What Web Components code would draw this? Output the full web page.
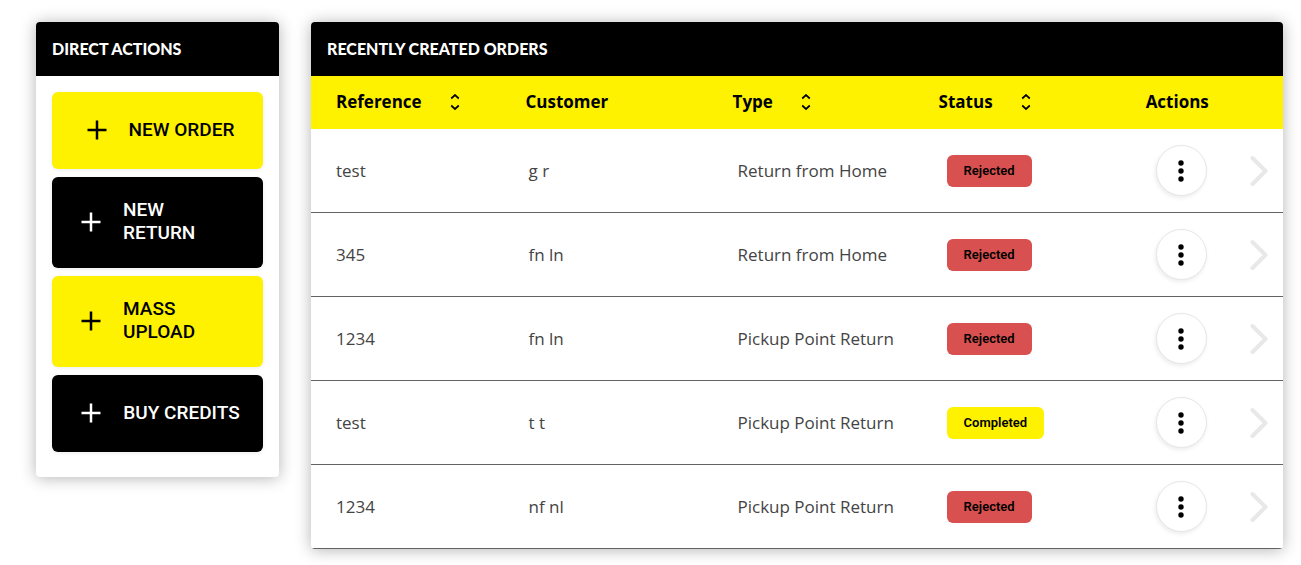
<!DOCTYPE html>
<html lang="en">
<head>
<meta charset="utf-8">
<title>Orders dashboard</title>
<style>
  body { margin: 0; background: #fff; font-family: "Open Sans", "Noto Sans", sans-serif; }
</style>
</head>
<body>
<orders-dashboard></orders-dashboard>

<script>
const define = (name, html, setup) => {
  const template = document.createElement("template");
  template.innerHTML = html;
  customElements.define(name, class extends HTMLElement {
    constructor() {
      super();
      this.attachShadow({ mode: "open" }).append(template.content.cloneNode(true));
    }
    connectedCallback() { if (setup) setup(this, this.shadowRoot); }
  });
};

define("panel-card", `
  <style>
    :host { display: block; background: #fff; border-radius: 4px; box-shadow: 0 1px 16px rgba(0,0,0,.3); overflow: hidden; }
    h2 { margin: 0; padding: 0 16px; background: #000; color: #fff; font: 900 16px/54px Lato, sans-serif; }
  </style>
  <h2><slot name="title"></slot></h2>
  <slot></slot>
`);

define("action-button", `
  <style>
    :host { display: block; }
    button { display: flex; width: 100%; box-sizing: border-box; justify-content: center; align-items: center; gap: 16px;
      margin: 0; padding: 21px 23px 24px; border: 0; border-radius: 6px; background: #fff200; color: #000;
      font: 500 19px/23px Roboto, sans-serif; text-align: left; cursor: pointer; box-shadow: 0 1px 4px rgba(0,0,0,.08); }
    :host([dark]) button { background: #000; color: #fff; }
    svg { flex: none; }
  </style>
  <button type="button">
    <svg width="32" height="32" viewBox="0 0 32 32" aria-hidden="true"><path d="M16 7.500v19M6.500 17h19" stroke="currentColor" stroke-width="2.500" fill="none"/></svg>
    <span><slot></slot></span>
  </button>
`);

define("sort-toggle", `
  <style>
    :host { display: inline-flex; vertical-align: middle; }
    button { display: flex; margin: 0; padding: 0; border: 0; background: none; color: #000; cursor: pointer; }
  </style>
  <button type="button" aria-label="Sort"><svg width="10" height="18" viewBox="0 0 10 18" fill="none" stroke="currentColor" stroke-width="1.700"><path d="M1.200 4.500L5 1l3.800 3.500M1.200 11.500L5 15l3.800-3.500"/></svg></button>
`);

define("status-badge", `
  <style>
    :host { display: inline-block; vertical-align: middle; padding: 0 17px; border-radius: 6px; background: #d95050; color: #000;
      font: 600 13px/32px Roboto, sans-serif; }
    :host([kind="completed"]) { background: #fff200; }
  </style>
  <slot></slot>
`);

define("row-menu", `
  <style>
    :host { display: block; }
    button { display: flex; align-items: center; justify-content: center; box-sizing: border-box; width: 51px; height: 51px;
      margin: 0; padding: 0; border: 1px solid #e6e6e6; border-radius: 50%; background: #fff; cursor: pointer; box-shadow: -1px 2px 4px rgba(0,0,0,.08); }
  </style>
  <button type="button" aria-label="Row actions"><svg width="6" height="22" viewBox="0 0 6 22"><circle cx="3" cy="3" r="2.700"/><circle cx="3" cy="11" r="2.700"/><circle cx="3" cy="19" r="2.700"/></svg></button>
`);

define("orders-table", `
  <style>
    :host { display: block; }
    table { width: 100%; table-layout: fixed; border-collapse: separate; border-spacing: 0; font-size: 17px; line-height: 24px; color: #444; }
    .c1 { width: 19.6%; } .c2 { width: 21.3%; } .c3 { width: 21.2%; } .c4 { width: 21.3%; }
    th { height: 53px; box-sizing: border-box; padding: 0 0 2px 24px; background: #fff200; color: #000; font-weight: 700; text-align: left; white-space: nowrap; }
    th sort-toggle { margin-left: 24px; }
    td { height: 84px; box-sizing: border-box; padding: 0 0 0 24px; border-bottom: 1px solid #626262; }
    th:first-child, td:first-child { padding-left: 25px; }
    td:nth-child(2) { padding-left: 27px; }
    td:nth-child(3) { padding-left: 29px; }
    td:nth-child(4) { padding-left: 32px; }
    td:nth-child(5) { padding: 0 15px 0 34px; }
    .tools { display: flex; align-items: center; justify-content: space-between; }
    a { display: flex; }
  </style>
  <table>
    <colgroup><col class="c1"><col class="c2"><col class="c3"><col class="c4"><col></colgroup>
    <thead><tr>
      <th scope="col">Reference <sort-toggle></sort-toggle></th>
      <th scope="col">Customer</th>
      <th scope="col">Type <sort-toggle></sort-toggle></th>
      <th scope="col">Status <sort-toggle></sort-toggle></th>
      <th scope="col">Actions</th>
    </tr></thead>
    <tbody></tbody>
  </table>
`, (host, root) => {
  const orders = [
    ["test", "g r", "Return from Home", "Rejected"],
    ["345", "fn ln", "Return from Home", "Rejected"],
    ["1234", "fn ln", "Pickup Point Return", "Rejected"],
    ["test", "t t", "Pickup Point Return", "Completed"],
    ["1234", "nf nl", "Pickup Point Return", "Rejected"]
  ];
  root.querySelector("tbody").innerHTML = orders.map(([ref, customer, type, status]) => `
    <tr>
      <td>${ref}</td><td>${customer}</td><td>${type}</td>
      <td><status-badge kind="${status.toLowerCase()}">${status}</status-badge></td>
      <td><div class="tools"><row-menu></row-menu>
        <a href="#" aria-label="Open order"><svg width="18" height="32" viewBox="0 0 18 32" fill="none" stroke="#e8e8e8" stroke-width="4" stroke-linecap="round" stroke-linejoin="round"><path d="M2.500 3L15.500 16L2.500 29"/></svg></a>
      </div></td>
    </tr>`).join("");
});

define("orders-dashboard", `
  <style>
    :host { display: grid; grid-template-columns: 1fr 4fr; gap: 32px; align-items: start; padding: 22px 18px 16px 36px; }
    .actions { display: grid; gap: 8px; padding: 16px 16px 25px; }
  </style>
  <panel-card>
    <span slot="title">DIRECT ACTIONS</span>
    <div class="actions">
      <action-button>NEW ORDER</action-button>
      <action-button dark>NEW RETURN</action-button>
      <action-button>MASS UPLOAD</action-button>
      <action-button dark>BUY CREDITS</action-button>
    </div>
  </panel-card>
  <panel-card>
    <span slot="title">RECENTLY CREATED ORDERS</span>
    <orders-table></orders-table>
  </panel-card>
`);
</script>
</body>
</html>
